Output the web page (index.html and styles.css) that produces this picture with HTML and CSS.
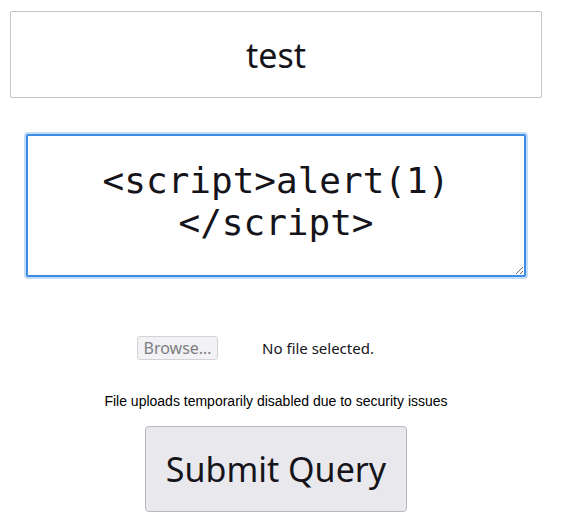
FILE: index.html
```html
<!DOCTYPE html>
<html>
<head>
<meta charset="utf-8">
<link rel="stylesheet" href="styles.css">
</head>
<body>
<form class="form">
  <input class="name-field" type="text" value="test">
  <textarea class="code-field"><script>alert(1)
</script></textarea>
  <div class="file-row">
    <span class="browse-btn">Browse…</span>
    <span class="file-label">No file selected.</span>
  </div>
  <p class="notice">File uploads temporarily disabled due to security issues</p>
  <button class="submit-btn" type="button">Submit Query</button>
</form>
</body>
</html>
```

FILE: styles.css
```css
html, body {
  margin: 0;
  padding: 0;
  background: #ffffff;
}

.form {
  width: 552px;
  display: flex;
  flex-direction: column;
  align-items: center;
  padding-top: 11px;
  margin: 0;
}

.name-field {
  box-sizing: border-box;
  width: 532px;
  height: 87px;
  border: 1px solid #c4c4c4;
  border-radius: 2px;
  font-family: "Noto Sans", sans-serif;
  font-size: 34px;
  color: #15141a;
  text-align: center;
  padding: 0 8px;
  outline: none;
  background: #fff;
}

.code-field {
  box-sizing: border-box;
  width: 500px;
  height: 143px;
  margin-top: 36px;
  border: 2px solid #3f8ae2;
  border-radius: 2px;
  box-shadow: 0 0 0 2px #c3def8;
  font-family: "DejaVu Sans Mono", monospace;
  font-size: 36px;
  line-height: 1.164;
  color: #15141a;
  text-align: center;
  padding: 24px 6px 0;
  outline: none;
  background: #fff;
  overflow: hidden;
}

.file-row {
  width: 278px;
  display: flex;
  align-items: center;
  gap: 44px;
  margin-top: 59px;
}

.browse-btn {
  box-sizing: border-box;
  width: 81px;
  height: 24px;
  display: flex;
  align-items: center;
  justify-content: center;
  background: #f2f2f4;
  border: 1px solid #d3d3d6;
  border-radius: 3px;
  font-family: "Noto Sans", sans-serif;
  font-size: 16px;
  color: #7d7d83;
}

.file-label {
  font-family: "Noto Sans", sans-serif;
  font-size: 15px;
  color: #15141a;
}

.notice {
  margin: 33px 0 0;
  font-family: "Liberation Sans", Arial, sans-serif;
  font-size: 14px;
  line-height: 16px;
  color: #000;
}

.submit-btn {
  box-sizing: border-box;
  width: 262px;
  height: 86px;
  margin-top: 17px;
  background: #e9e9ed;
  border: 1px solid #b8b8bf;
  border-radius: 4px;
  font-family: "Noto Sans", sans-serif;
  font-size: 34px;
  color: #15141a;
  padding: 0;
}
```
